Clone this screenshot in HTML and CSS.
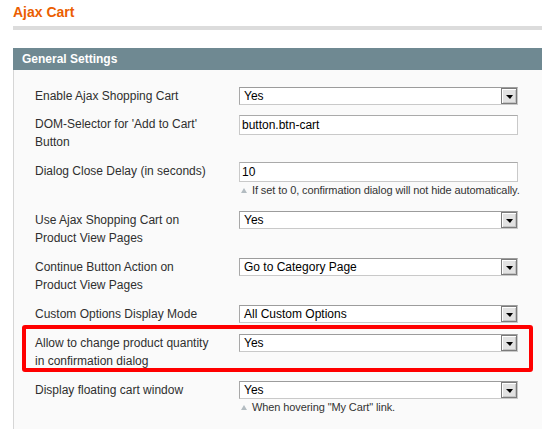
FILE: index.html
```html
<!DOCTYPE html>
<html lang="en">
<head>
  <meta charset="UTF-8">
  <title>Ajax Cart - Configuration</title>
  <link rel="stylesheet" href="styles.css">
</head>
<body>
  <h3 class="page-title">Ajax Cart</h3>

  <div class="section">
    <div class="section-head">General Settings</div>
    <div class="section-body">

      <div class="row">
        <div class="label">Enable Ajax Shopping Cart</div>
        <div class="value">
          <div class="select"><span class="select-text">Yes</span><span class="select-btn"></span></div>
        </div>
      </div>

      <div class="row">
        <div class="label">DOM-Selector for 'Add to Cart' Button</div>
        <div class="value">
          <div class="input">button.btn-cart</div>
        </div>
      </div>

      <div class="row">
        <div class="label">Dialog Close Delay (in seconds)</div>
        <div class="value">
          <div class="input">10</div>
          <p class="note"><span class="note-arrow"></span>If set to 0, confirmation dialog will not hide automatically.</p>
        </div>
      </div>

      <div class="row">
        <div class="label">Use Ajax Shopping Cart on Product View Pages</div>
        <div class="value">
          <div class="select"><span class="select-text">Yes</span><span class="select-btn"></span></div>
        </div>
      </div>

      <div class="row">
        <div class="label">Continue Button Action on Product View Pages</div>
        <div class="value">
          <div class="select"><span class="select-text">Go to Category Page</span><span class="select-btn"></span></div>
        </div>
      </div>

      <div class="row">
        <div class="label">Custom Options Display Mode</div>
        <div class="value">
          <div class="select"><span class="select-text">All Custom Options</span><span class="select-btn"></span></div>
        </div>
      </div>

      <div class="row highlight">
        <div class="label">Allow to change product quantity in confirmation dialog</div>
        <div class="value">
          <div class="select"><span class="select-text">Yes</span><span class="select-btn"></span></div>
        </div>
      </div>

      <div class="row">
        <div class="label">Display floating cart window</div>
        <div class="value">
          <div class="select"><span class="select-text">Yes</span><span class="select-btn"></span></div>
          <p class="note"><span class="note-arrow"></span>When hovering "My Cart" link.</p>
        </div>
      </div>

    </div>
  </div>
</body>
</html>
```

FILE: styles.css
```css
* {
  box-sizing: border-box;
  margin: 0;
  padding: 0;
}

body {
  font-family: "Liberation Sans", Arial, sans-serif;
  font-size: 12px;
  color: #2f2f2f;
  background: #fff;
  padding: 3px 0 0 13px;
  overflow: hidden;
}

.page-title {
  font-size: 14px;
  line-height: 18px;
  font-weight: bold;
  color: #eb5e00;
  padding-bottom: 5px;
  border-bottom: 4px solid #dcdcdc;
  margin-bottom: 18px;
}

.section-head {
  background: #6f8992;
  color: #fff;
  font-weight: bold;
  font-size: 12px;
  line-height: 22px;
  height: 22px;
  padding-left: 9px;
}

.section-body {
  background: #fafafa;
  border-left: 1px solid #d6d6d6;
  padding: 17px 0 30px 21px;
}

.row {
  display: flex;
  width: 483px;
  margin-bottom: 11px;
}

.row:first-child {
  margin-bottom: 10px;
}

.label {
  width: 180px;
  margin-right: 24px;
  line-height: 18px;
}

.value {
  width: 279px;
}

/* fake windows-like select */
.select {
  display: flex;
  height: 18px;
  background: #fff;
  border: 1px solid #c9c9c9;
  border-top-color: #9c9c9c;
  border-left-color: #a8a8a8;
  color: #000;
}

.select-text {
  flex: 1;
  padding-left: 4px;
  line-height: 16px;
}

.select-btn {
  width: 16px;
  height: 16px;
  background: #e2e2e2;
  border: 1px solid #7b7b7b;
  box-shadow: inset 1px 1px #fff, inset -1px -1px #c4c4c4;
  display: flex;
  align-items: center;
  justify-content: center;
}

.select-btn::after {
  content: "";
  width: 0;
  height: 0;
  border-left: 4px solid transparent;
  border-right: 3px solid transparent;
  border-top: 4px solid #000;
  margin-top: 1px;
}

.input {
  height: 20px;
  background: #fff;
  border: 1px solid #c9c9c9;
  border-top-color: #aaa;
  color: #000;
  line-height: 18px;
  padding-left: 2px;
}

.note {
  font-size: 11px;
  line-height: 16px;
  padding-bottom: 2px;
  color: #333;
  letter-spacing: -0.1px;
  white-space: nowrap;
  display: flex;
  align-items: center;
}

.note-arrow {
  width: 0;
  height: 0;
  border-left: 3px solid transparent;
  border-right: 3px solid transparent;
  border-bottom: 5px solid #b3bcc1;
  margin: 1px 5px 0 2px;
}

/* red annotation around one row */
.highlight {
  position: relative;
}

.highlight::after {
  content: "";
  position: absolute;
  top: -9px;
  bottom: -2px;
  left: -13px;
  right: -15px;
  border: 4px solid #f00;
  border-radius: 3px;
}
```
